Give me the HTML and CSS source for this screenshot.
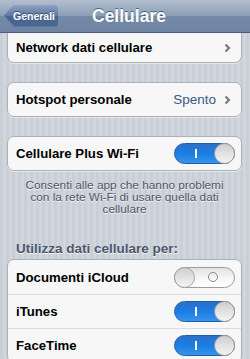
FILE: index.html
```html
<!DOCTYPE html>
<html lang="it">
<head>
    <meta charset="UTF-8">
    <title>Cellulare</title>
    <link rel="stylesheet" href="styles.css">
</head>
<body>
    <div class="nav">
        <a class="back" href="javascript:;">Generali</a>
        <h1 class="title">Cellulare</h1>
    </div>

    <div class="page">
        <ul class="group group_cut">
            <li class="cell">
                <span class="label">Network dati cellulare</span>
                <svg class="chev" width="7" height="10" viewBox="0 0 7 10"><polyline points="1.5,1.5 5,5 1.5,8.5" fill="none" stroke="#7a7a7a" stroke-width="2.2"/></svg>
            </li>
        </ul>

        <ul class="group">
            <li class="cell">
                <span class="label">Hotspot personale</span>
                <span class="value">Spento</span>
                <svg class="chev" width="7" height="10" viewBox="0 0 7 10"><polyline points="1.5,1.5 5,5 1.5,8.5" fill="none" stroke="#7a7a7a" stroke-width="2.2"/></svg>
            </li>
        </ul>

        <ul class="group">
            <li class="cell">
                <span class="label">Cellulare Plus Wi-Fi</span>
                <span class="switch on"><i class="mark"></i><b class="knob"></b></span>
            </li>
        </ul>
        <p class="footer">Consenti alle app che hanno problemi con la rete Wi-Fi di usare quella dati cellulare</p>

        <h2 class="header">Utilizza dati cellulare per:</h2>
        <ul class="group">
            <li class="cell">
                <span class="label">Documenti iCloud</span>
                <span class="switch off"><b class="knob"></b><i class="mark"></i></span>
            </li>
            <li class="cell">
                <span class="label">iTunes</span>
                <span class="switch on"><i class="mark"></i><b class="knob"></b></span>
            </li>
            <li class="cell">
                <span class="label">FaceTime</span>
                <span class="switch on"><i class="mark"></i><b class="knob"></b></span>
            </li>
        </ul>
    </div>
</body>
</html>
```

FILE: styles.css
```css
*{
    margin: 0;
    padding: 0;
    list-style-type: none;
    box-sizing: border-box;
}
body{
    width:250px;
    height:359px;
    overflow:hidden;
    font-family:"Liberation Sans", Arial, sans-serif;
    background:repeating-linear-gradient(90deg, #c8cfd6 0, #c8cfd6 3px, #d0d6dc 3px, #d0d6dc 6px);
}
.nav{
    height:33px;
    display:flex;
    align-items:center;
    padding-left:4px;
    background:linear-gradient(#b3bfcf, #8a9db6 50%, #7389a6 51%, #6e84a2);
    border-bottom:1px solid #4d5f78;
}
.back{
    height:22px;
    width:54px;
    margin-top:-1px;
    display:flex;
    align-items:center;
    justify-content:center;
    padding-left:6px;
    font-size:10.5px;
    font-weight:bold;
    color:#fff;
    text-decoration:none;
    text-shadow:0 -1px 0 #3d4f6b;
    background:linear-gradient(#8ea3c0, #5a76a0 50%, #46648f 51%, #4a6892);
    clip-path:polygon(10px 0, 100% 0, 100% 100%, 10px 100%, 0 50%);
    border-radius:0 4px 4px 0;
}
.title{
    margin-left:34px;
    font-size:17.5px;
    font-weight:bold;
    color:#fff;
    text-shadow:0 -1px 0 #4c5d78;
}
.page{
    padding:0 8px 0 7px;
}
.group{
    background:#f7f7f7;
    border:1px solid #aab1ba;
    border-radius:7px;
    box-shadow:0 1px 0 #e3e7ea;
    margin-top:19px;
}
.group_cut{
    margin-top:0;
    border-top:none;
    border-radius:0 0 7px 7px;
}
.group_cut .cell{
    height:29px;
}
.cell{
    height:33px;
    display:flex;
    align-items:center;
    padding:0 8px 0 8px;
    border-top:1px solid #dcdcdc;
}
.cell:first-child{
    border-top:none;
}
.group:last-child .cell{
    height:34px;
}
.label{
    flex:1;
    font-size:13.2px;
    font-weight:bold;
    color:#000;
}
.value{
    font-size:13.5px;
    color:#3c5687;
    margin-right:8px;
}
.chev{
    margin-right:2px;
}
.switch{
    width:61px;
    height:21px;
    border-radius:11px;
    display:flex;
    align-items:center;
    margin-right:-2px;
    border:1px solid #9c9c9c;
}
.switch.on{
    background:linear-gradient(#2b6fc9, #1a80e6 55%, #3b93ea);
    border-color:#1b5fa8;
}
.switch.off{
    background:linear-gradient(#e2e2e2, #f8f8f8 60%, #fdfdfd);
}
.knob{
    width:21px;
    height:21px;
    margin:0 -1px;
    border-radius:50%;
    border:1px solid #a2a2a2;
    background:linear-gradient(#cfcfcf, #f4f4f4);
}
.mark{
    flex:1;
    display:flex;
    justify-content:center;
}
.switch.on .mark::before{
    content:"";
    width:2px;
    height:9px;
    background:#fff;
    margin-left:2px;
}
.switch.off .mark::before{
    content:"";
    width:8px;
    height:8px;
    border-radius:50%;
    border:1.5px solid #8a8a8a;
    margin-right:2px;
}
.footer{
    font-size:11.8px;
    line-height:12px;
    color:#4c566c;
    text-align:center;
    text-shadow:0 1px 0 #f2f4f6;
    padding:8px 10px 0;
}
.header{
    font-size:13.5px;
    line-height:16px;
    font-weight:bold;
    color:#4c566c;
    text-shadow:0 1px 0 #f2f4f6;
    padding:26px 0 0 9px;
    margin-bottom:-17px;
}
```
